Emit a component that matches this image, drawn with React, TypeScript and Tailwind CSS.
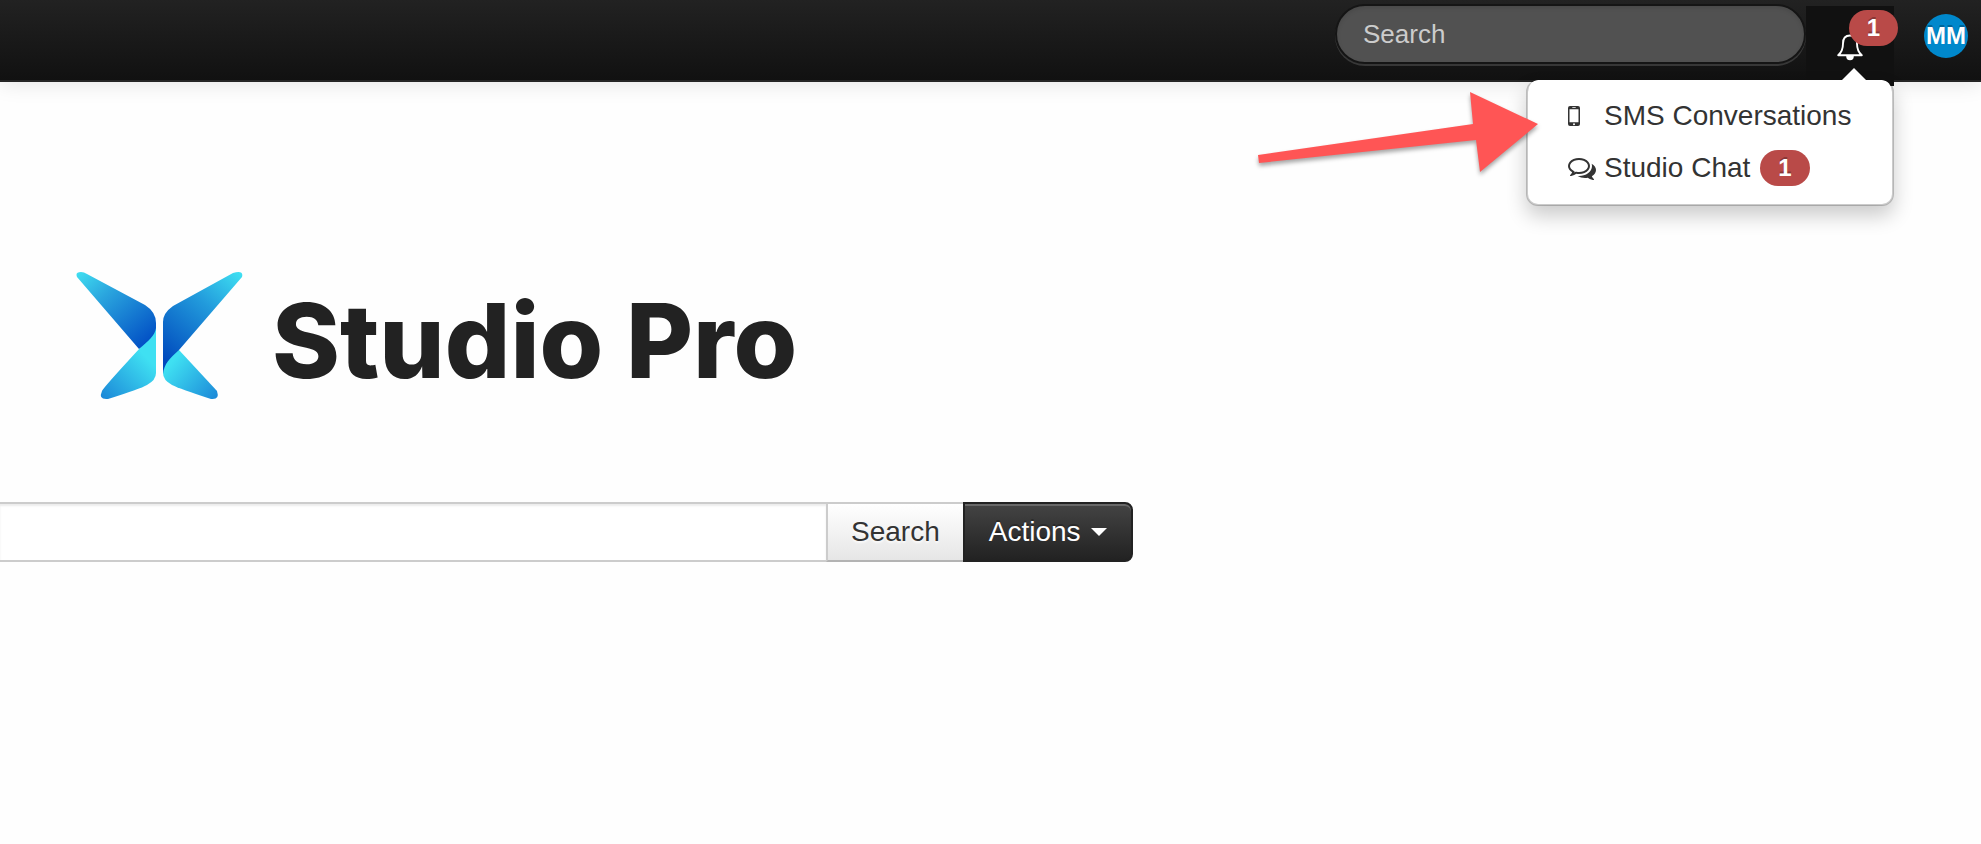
import type { FormEvent, ReactNode } from "react";

function ButterflyLogo() {
  return (
    <svg width="168" height="130" viewBox="76 271 168 130" aria-hidden="true">
      <defs>
        <linearGradient id="wingTopLeft" gradientUnits="userSpaceOnUse" x1="80" y1="272" x2="142" y2="345">
          <stop offset="0" stopColor="#3fdcf0" />
          <stop offset="0.35" stopColor="#2aa5de" />
          <stop offset="1" stopColor="#0353c6" />
        </linearGradient>
        <linearGradient id="wingTopRight" gradientUnits="userSpaceOnUse" x1="240" y1="272" x2="164" y2="360">
          <stop offset="0" stopColor="#3fe0f2" />
          <stop offset="0.4" stopColor="#229bdc" />
          <stop offset="1" stopColor="#0049bd" />
        </linearGradient>
        <linearGradient id="wingLowLeft" gradientUnits="userSpaceOnUse" x1="147" y1="358" x2="104" y2="400">
          <stop offset="0" stopColor="#3fe0f2" />
          <stop offset="1" stopColor="#1b88d8" />
        </linearGradient>
        <linearGradient id="wingLowRight" gradientUnits="userSpaceOnUse" x1="172" y1="362" x2="216" y2="400">
          <stop offset="0" stopColor="#3fe0f2" />
          <stop offset="1" stopColor="#1b88d8" />
        </linearGradient>
      </defs>
      <path d="M156 326V373Q156 380 147 385Q140 389 108 399Q98 400 102 391Q103 388 140 348Z" fill="url(#wingLowLeft)" />
      <path d="M139 349L77 277Q75 272 81 272Q84 272 87 274L145 305Q156 312 156 323V328C155 336 148 341 139 349Z" fill="url(#wingTopLeft)" />
      <path d="M179 350L217 391Q220 400 211 399Q180 389 172 385Q163 380 163 373L164 345Z" fill="url(#wingLowRight)" />
      <path d="M163 374V322Q163 313 173 306L233 273Q244 270 242 277L179 350C170 358 164 364 163 374Z" fill="url(#wingTopRight)" />
    </svg>
  );
}

function BellIcon() {
  return (
    <svg width="26" height="28" viewBox="0 0 26 28" fill="none" stroke="#fff" strokeWidth="1.9" aria-hidden="true">
      <path d="M13 1.5C8 1.5 6 5 6 9.500C6 15.500 4.500 18.500 1.200 21.200H24.800C21.500 18.500 20 15.500 20 9.500C20 5 18 1.500 13 1.500Z" strokeLinejoin="round" />
      <path d="M9.200 22A3.800 4.300 0 0 0 16.800 22Z" fill="#fff" stroke="none" />
    </svg>
  );
}

function MobileIcon() {
  return (
    <svg width="12" height="20" viewBox="0 0 12 20" aria-hidden="true">
      <path
        fillRule="evenodd"
        fill="#333"
        d="M2 0H10Q12 0 12 2V18Q12 20 10 20H2Q0 20 0 18V2Q0 0 2 0ZM1.500 3.200V16.300H10.500V3.200ZM4.300 1.200V2H7.700V1.200ZM6 17.200A1 1 0 1 0 6 19.200A1 1 0 1 0 6 17.200Z"
      />
    </svg>
  );
}

function ChatIcon() {
  return (
    <svg width="28" height="28" viewBox="0 0 1792 1792" fill="#333" aria-hidden="true">
      <path d="M704 384q-153 0-286 52t-211.500 141-78.500 191q0 82 53 158t149 132l97 56-35 84q34-20 62-39l44-31 53 10q78 14 153 14 153 0 286-52t211.500-141 78.500-191-78.500-191-211.500-141-286-52zm0-128q191 0 353.500 68.500t256.500 186.500 94 257-94 257-256.500 186.500-353.500 68.500q-86 0-176-16-124 88-278 128-36 9-86 16h-3q-11 0-20.500-8t-11.500-21q-1-3-1-6.500t.5-6.500 2-6l2.500-5 3.500-5.500 4-5 4.500-5 4-4.500q5-6 23-25t26-29.500 22.500-29 25-38.500 20.500-44q-124-72-195-177t-71-224q0-139 94-257t256.500-186.500 353.500-68.500zm822 1169q10 24 20.500 44t25 38.500 22.500 29 26 29.500 23 25q1 1 4 4.500t4.500 5 4 5 3.500 5.500l2.500 5 2 6 .5 6.500-1 6.500q-3 14-13 22t-22 7q-50-7-86-16-154-40-278-128-90 16-176 16-271 0-472-132 58 4 88 4 161 0 309-45t264-129q125-92 192-212t67-254q0-77-23-152 129 71 204 178t75 230q0 120-71 224.500t-195 176.500z" />
    </svg>
  );
}

function Badge({ children }: { children: ReactNode }) {
  return (
    <span className="flex h-9 items-center rounded-full bg-[#b94a48] px-[18px] text-2xl font-bold text-white [text-shadow:0_-2px_0_rgba(0,0,0,0.25)]">
      {children}
    </span>
  );
}

function NotificationMenu() {
  return (
    <div className="relative mt-1.5 h-20 w-[88px] bg-[#111]">
      <button type="button" aria-label="Notifications" className="flex h-full w-full justify-center pt-7">
        <BellIcon />
      </button>
      <div className="pointer-events-none absolute top-1 -right-1">
        <Badge>1</Badge>
      </div>

      <ul className="absolute top-[74px] right-0 w-[368px] rounded-xl border-2 border-t-0 border-black/20 bg-white bg-clip-padding py-2.5 shadow-[0_10px_20px_rgba(0,0,0,0.2)]">
        <li className="absolute -top-3 right-[26px] border-x-[12px] border-b-[12px] border-x-transparent border-b-white" />
        <li>
          <a href="#sms" className="flex h-[52px] items-center pl-10">
            <span className="w-9">
              <MobileIcon />
            </span>
            SMS Conversations
          </a>
        </li>
        <li>
          <a href="#chat" className="flex h-[52px] items-center pl-10">
            <span className="w-9">
              <ChatIcon />
            </span>
            <span className="mr-2.5">Studio Chat</span>
            <Badge>1</Badge>
          </a>
        </li>
      </ul>

      {/* arrow pointing at the first menu entry */}
      <svg
        className="pointer-events-none absolute top-[82px] right-[352px] drop-shadow-[0_3px_2px_rgba(0,0,0,0.35)]"
        width="288"
        height="90"
        viewBox="1254 88 288 90"
        aria-hidden="true"
      >
        <path d="M1258 155L1473 124L1470 92L1538 124L1480 172L1476 140L1259 163Z" fill="#f55" />
      </svg>
    </div>
  );
}

export default function App() {
  const handleSubmit = (e: FormEvent) => e.preventDefault();

  return (
    <div className="min-h-screen overflow-x-hidden bg-[#fefefe] font-['Liberation_Sans',Arial,sans-serif] text-[28px] leading-10 text-[#333]">
      <header className="relative z-10 flex h-[82px] items-start justify-end border-b-2 border-[#252525] bg-linear-to-b from-[#222] to-[#111] shadow-[0_2px_20px_rgba(0,0,0,0.1)]">
        <form onSubmit={handleSubmit} className="pt-1">
          <input
            type="text"
            aria-label="Search"
            placeholder="Search"
            className="block h-[60px] w-[471px] rounded-full border-2 border-[#151515] bg-[#515151] px-[26px] text-[26px] text-white shadow-[inset_0_2px_4px_rgba(0,0,0,0.1),0_2px_0_rgba(255,255,255,0.15)] outline-none placeholder:text-[#ccc]"
          />
        </form>
        <NotificationMenu />
        <a
          href="#profile"
          className="mt-3.5 mr-[13px] ml-[30px] flex h-11 w-11 items-center justify-center rounded-full bg-[#0088cc] text-2xl font-bold text-white [text-shadow:0_-2px_0_rgba(0,0,0,0.25)]"
        >
          MM
        </a>
      </header>

      <main className="pt-[189px]">
        <div className="flex items-center pl-[76px]">
          <ButterflyLogo />
          <h1 className="ml-7 pt-2 font-['Inter',sans-serif] text-[103px] leading-none font-extrabold text-[#222]">
            Studio Pro
          </h1>
        </div>

        <form onSubmit={handleSubmit} className="mt-[101px] flex">
          <input
            type="text"
            aria-label="Search term"
            className="h-[60px] w-[826px] border-y-2 border-[#ccc] bg-white px-3 shadow-[inset_0_2px_2px_rgba(0,0,0,0.075)] outline-none"
          />
          <button
            type="submit"
            className="h-[60px] border-2 border-r-0 border-[#ccc] border-b-[#b3b3b3] bg-linear-to-b from-white to-[#e6e6e6] px-[23px] [text-shadow:0_2px_2px_rgba(255,255,255,0.75)]"
          >
            Search
          </button>
          <button
            type="button"
            className="flex h-[60px] items-center gap-2.5 rounded-r-lg border-2 border-[#222] bg-linear-to-b from-[#444] to-[#222] px-6 text-white shadow-[inset_0_2px_0_rgba(255,255,255,0.2)] [text-shadow:0_-2px_0_rgba(0,0,0,0.25)]"
          >
            Actions
            <span className="border-x-8 border-t-8 border-x-transparent border-t-white" />
          </button>
        </form>
      </main>
    </div>
  );
}
